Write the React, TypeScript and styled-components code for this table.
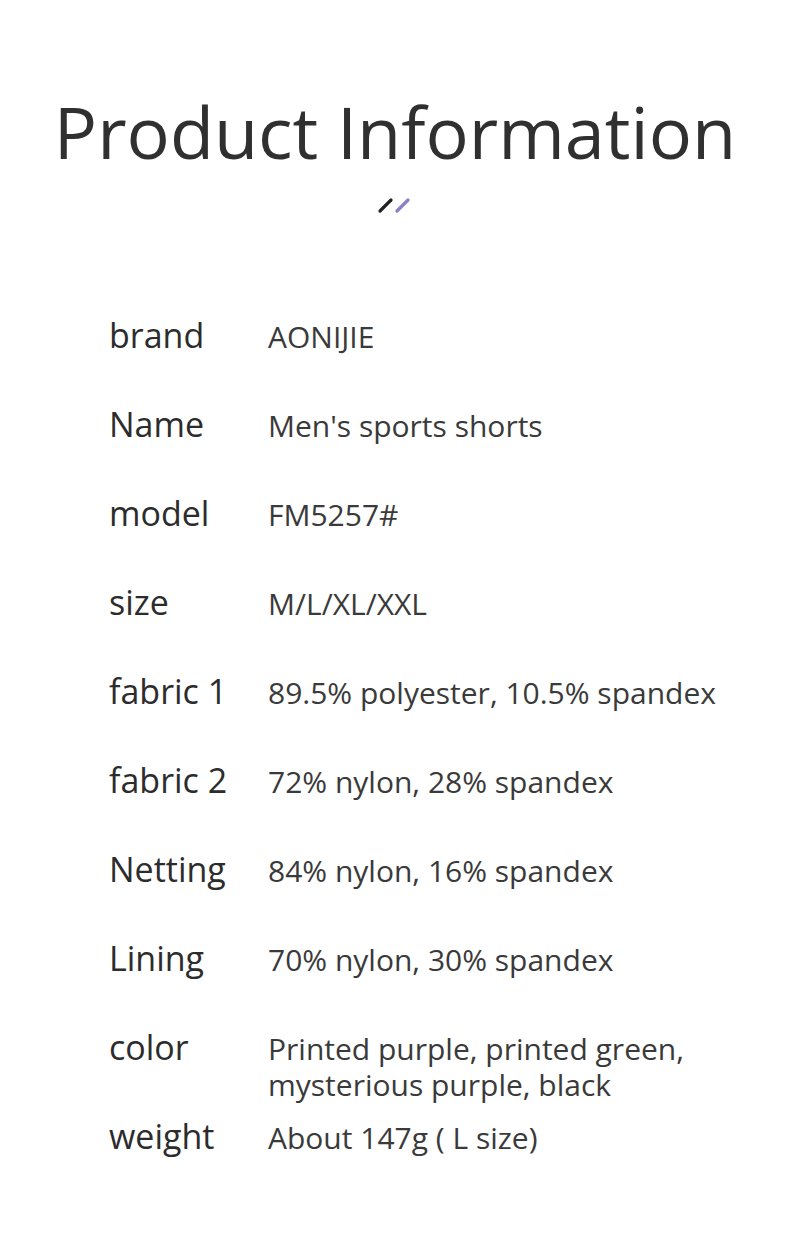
import React from 'react';
import styled, { createGlobalStyle } from 'styled-components';

const rows: { label: string; value: string[] }[] = [
  { label: 'brand', value: ['AONIJIE'] },
  { label: 'Name', value: ["Men's sports shorts"] },
  { label: 'model', value: ['FM5257#'] },
  { label: 'size', value: ['M/L/XL/XXL'] },
  { label: 'fabric 1', value: ['89.5% polyester, 10.5% spandex'] },
  { label: 'fabric 2', value: ['72% nylon, 28% spandex'] },
  { label: 'Netting', value: ['84% nylon, 16% spandex'] },
  { label: 'Lining', value: ['70% nylon, 30% spandex'] },
  { label: 'color', value: ['Printed purple, printed green,', 'mysterious purple, black'] },
  { label: 'weight', value: ['About 147g ( L size)'] },
];

export default function App() {
  return (
    <>
      <GlobalStyle />
      <Page>
        <Title>Product Information</Title>
        <Divider>
          <svg width="36" height="18" viewBox="0 0 36 18">
            <line x1="3" y1="15" x2="14" y2="4" stroke="#222" strokeWidth="3.2" strokeLinecap="round" />
            <line x1="20" y1="15" x2="31" y2="4" stroke="#8b80c2" strokeWidth="3.2" strokeLinecap="round" />
          </svg>
        </Divider>
        <Table>
          {rows.map((r) => (
            <Row key={r.label}>
              <Label>{r.label}</Label>
              <Value>
                {r.value.map((line) => (
                  <div key={line}>{line}</div>
                ))}
              </Value>
            </Row>
          ))}
        </Table>
      </Page>
    </>
  );
}

const GlobalStyle = createGlobalStyle`
  html, body {
    margin: 0;
    padding: 0;
    background: #fff;
  }
  body {
    font-family: 'Open Sans', 'Liberation Sans', sans-serif;
    color: #333;
  }
`;

const Page = styled.div`
  width: 790px;
  height: 1236px;
  padding-top: 91px;
  box-sizing: border-box;
  display: flex;
  flex-direction: column;
  align-items: center;
`;

const Title = styled.h1`
  margin: 0;
  font-size: 72px;
  line-height: 80px;
  font-weight: 400;
  color: #303030;
  white-space: nowrap;
`;

const Divider = styled.div`
  margin-top: 25px;
  height: 18px;
  display: flex;
  justify-content: center;
  svg {
    display: block;
  }
`;

const Table = styled.div`
  align-self: stretch;
  margin-top: 101px;
  padding-left: 109px;
  display: flex;
  flex-direction: column;
`;

const Row = styled.div`
  display: grid;
  grid-template-columns: 159px 1fr;
  align-items: baseline;
  height: 89px;
`;

const Label = styled.div`
  font-size: 34px;
  line-height: 40px;
  color: #2c2c2c;
  white-space: nowrap;
`;

const Value = styled.div`
  font-size: 30px;
  line-height: 36px;
  color: #3a3a3a;
  white-space: nowrap;
`;
